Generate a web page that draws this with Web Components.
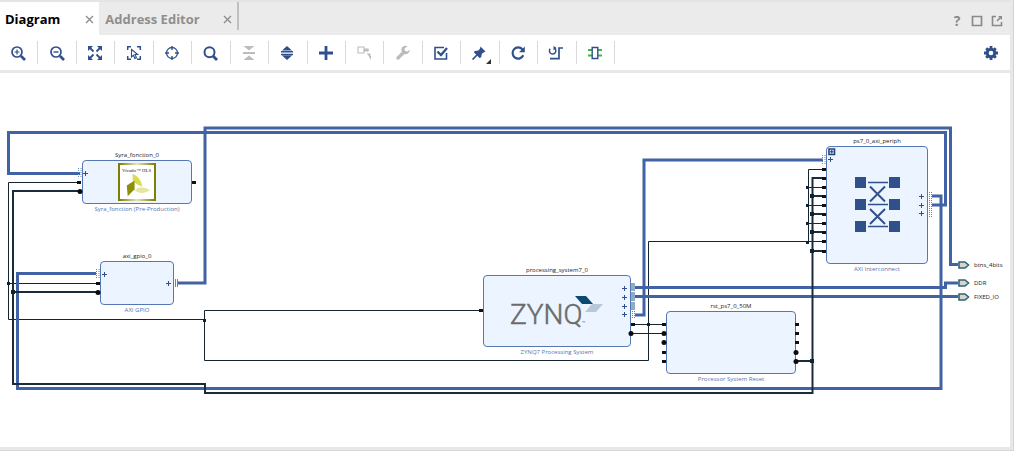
<!DOCTYPE html>
<html lang="en">
<head>
<meta charset="utf-8">
<title>Block Design</title>
<style>
body { margin: 0; background: #fff; font-family: "Open Sans", "Noto Sans", sans-serif; }
</style>
</head>
<body>
<design-panel>
  <panel-tab slot="tabs" label="Diagram" active></panel-tab>
  <panel-tab slot="tabs" label="Address Editor"></panel-tab>
  <tool-bar slot="toolbar"></tool-bar>
  <diagram-canvas>
    <block-node name="Syra_fonction_0" caption="Syra_fonction (Pre-Production)" style="--x:82px;--y:78px;--w:110px;--h:44px"><hls-logo></hls-logo></block-node>
    <block-node name="axi_gpio_0" caption="AXI GPIO" style="--x:100px;--y:179px;--w:74px;--h:44px"></block-node>
    <block-node name="processing_system7_0" caption="ZYNQ7 Processing System" style="--x:483px;--y:193px;--w:148px;--h:72px"><zynq-logo></zynq-logo></block-node>
    <block-node name="rst_ps7_0_50M" caption="Processor System Reset" style="--x:666px;--y:229px;--w:130px;--h:63px"></block-node>
    <block-node name="ps7_0_axi_periph" caption="AXI Interconnect" style="--x:826px;--y:64px;--w:102px;--h:118px"><crossbar-glyph></crossbar-glyph></block-node>
    <wire-layer></wire-layer>
    <external-port style="--x:958px;--y:187px">btns_4bits</external-port>
    <external-port style="--x:958px;--y:205px">DDR</external-port>
    <external-port style="--x:958px;--y:219px">FIXED_IO</external-port>
  </diagram-canvas>
</design-panel>

<script>
const define = (name, render) => customElements.define(name, class extends HTMLElement {
  connectedCallback() {
    if (this.shadowRoot) return;
    this.attachShadow({ mode: 'open' }).innerHTML = render(this);
  }
});

define('design-panel', () => `
<style>
  :host { display: block; margin-right: 10px; border-right: 1px solid #d4d4d4; border-bottom: 1px solid #d8d8d8; background: #e8e8e8; padding: 0 3px 3px 0; }
  header { display: flex; justify-content: space-between; height: 33px; border-top: 2px solid #e4e4e4; background: #ebebeb; }
  nav { display: flex; align-items: stretch; }
  .end { width: 2px; height: 28px; background: #c0c0c0; }
  .actions { display: flex; align-items: center; gap: 6px; padding: 4px 6px 0 0; }
  button { all: unset; display: block; width: 14px; height: 14px; }
  svg { display: block; fill: none; stroke: #8a8a8a; stroke-width: 2; }
  .help { font: bold 14px/14px "Open Sans", sans-serif; color: #8a8a8a; text-align: center; }
</style>
<header>
  <nav role="tablist"><slot name="tabs"></slot><span class="end"></span></nav>
  <div class="actions">
    <button class="help" aria-label="Help">?</button>
    <button aria-label="Maximize"><svg width="14" height="14"><path d="M2.500 2.500h9v9h-9z" stroke-width="1.700"/></svg></button>
    <button aria-label="Float"><svg width="14" height="14"><path d="M6 2.500H2.500v9h9V8M7 7l4-4" stroke-width="1.600"/><path d="M8 2h4v4z" fill="#8a8a8a" stroke="none"/></svg></button>
  </div>
</header>
<slot name="toolbar"></slot>
<slot></slot>`);

define('panel-tab', el => `
<style>
  :host { display: flex; align-items: center; background: #ebebeb; color: #8f8f8f; padding-left: 6px; gap: 23px; }
  :host([active]) { background: #fff; color: #000; padding-left: 5px; gap: 25px; }
  button { all: unset; }
  .name { font-weight: bold; font-size: 13px; line-height: 18px; }
  .close { width: 9px; height: 9px; margin-right: 5px; padding-top: 2px; }
  svg { display: block; stroke: #8c8c8c; stroke-width: 1.3; }
</style>
<button class="name" role="tab" aria-selected="${el.hasAttribute('active')}">${el.getAttribute('label')}</button>
<button class="close" aria-label="Close ${el.getAttribute('label')}"><svg width="9" height="9"><path d="M1 1l7 7M8 1l-7 7"/></svg></button>`);

const B = '#30508c', G = '#bcbcbc';
const tools = [
  ['Zoom In', `<circle cx="7" cy="7" r="5" stroke-width="1.7"/><path d="M11 11l4 4" stroke-width="2.600"/><path d="M4.500 7h5M7 4.500v5" stroke-width="1.2"/>`],
  ['Zoom Out', `<circle cx="7" cy="7" r="5" stroke-width="1.7"/><path d="M11 11l4 4" stroke-width="2.600"/><path d="M4.500 7h5" stroke-width="1.4"/>`],
  ['Zoom Fit', `<path d="M3 3l3.500 3.500M13 3L9.500 6.500M3 13l3.500-3.500M13 13L9.500 9.500" stroke-width="1.8"/><path d="M1 1h5L1 6zM15 1v5l-5-5zM1 15v-5l5 5zM15 15h-5l5-5z" fill="${B}" stroke="none"/>`],
  ['Zoom to Selection', `<path d="M1.700 5V1.700H5M11 1.700h3.300V5M1.700 11v3.300H5M11 14.300h3.300V11" stroke-width="1.5"/><path d="M5.500 4.500v7.500l2-1.800 1.400 3.300 1.600-.7L9 9.500h2.700z" stroke-width="1.1"/>`],
  ['Auto Fit Selection', `<circle cx="8" cy="8" r="5.500" stroke-width="1.3"/><path d="M8 1v4M8 11v4M1 8h4M11 8h4" stroke-width="1.4"/>`],
  ['Search', `<circle cx="7.500" cy="7.300" r="5" stroke-width="2"/><path d="M11 11l4 4" stroke-width="2.800"/>`],
  ['Collapse All', `<path d="M2.500 1h11L8 5.500zM2.500 15h11L8 10.500zM2 7h12v2H2z" fill="${G}" stroke="none"/>`],
  ['Expand All', `<path d="M8 1l5 4.500H3zM8 15l5-4.500H3zM2 6h12v1.500H2zM2 8.700h12v1.500H2z" fill="${B}" stroke="none"/>`],
  ['Add IP', `<path d="M8 1v14M1 8h14" stroke-width="2.800"/>`],
  ['Make Connection', `<path d="M2 2h6v6H2z" stroke="${G}" stroke-width="1.100"/><path d="M8 5h5" stroke="${G}" stroke-width="1.100"/><path d="M8 3l3 2-3 2zM9.500 3.500h3v3h-3zM10.500 8.500h4v4zM12 10l3 1v4z" fill="${G}" stroke="none"/>`],
  ['Customize Block', `<path d="M3 13l6-6" stroke="${G}" stroke-width="3.400" stroke-linecap="round"/><path d="M12.500 1.300A4.200 4.200 0 1 0 14.700 4.600L12.500 6.500l-2.600-.6L9.600 3.500z" fill="${G}" stroke="none"/>`],
  ['Validate Design', `<path d="M11 2.500H2v11.500h11.500V8" stroke-width="1.600"/><path d="M4.500 6.500l3.500 3.500L14 3" stroke-width="2.300"/>`],
  ['Pin', `<path d="M9.500 1.500l5 5-1.500.7-2.200 1.600-.6 3.400L8.500 13 2.800 7.300l1-1.300 3.600-.5L9 3.500z" fill="${B}" stroke="none"/><path d="M6.500 9.500L1.500 14.500" stroke-width="1.700"/><path d="M15 19h5v-5z" fill="#333" stroke="none"/>`],
  ['Regenerate Layout', `<path d="M13.300 10.300A5.600 5.600 0 1 1 12.400 4.300" stroke-width="2.200"/><path d="M14.800 1.500v5.800H9z" fill="${B}" stroke="none"/>`],
  ['Optimize Routing', `<path d="M2.200 3.700A3.200 3.200 0 1 0 6.500 3.200" stroke-width="1.500"/><path d="M5.500 1v4.200l3.200-2.200z" fill="${B}" stroke="none"/><path d="M2 13.700h9V3h4" stroke-width="1.700"/>`],
  ['Interface Ports', `<path d="M1 5h4M1 10.500h4M11 5h4M11 10.500h4" stroke="#43b649" stroke-width="2"/><path d="M5.200 2.500h5.600v11H5.200z" stroke-width="1.400"/>`]
];
define('tool-bar', () => `
<style>
  :host { display: flex; justify-content: space-between; align-items: center; background: #fff; height: 35px; border-bottom: 2px solid #e8e8e8; padding-right: 11px; }
  .group { display: grid; grid-template-columns: repeat(16, 1fr); width: 615px; }
  .cell { display: flex; justify-content: center; align-items: center; height: 23px; padding-right: 1px; border-right: 1px solid #d9d9d9; }
  button { all: unset; display: block; width: 16px; height: 16px; }
  svg { display: block; overflow: visible; fill: none; stroke: ${B}; stroke-width: 2; }
</style>
<div class="group" role="toolbar" aria-label="Diagram tools">${tools.map(([n, p]) => `<div class="cell"><button aria-label="${n}"><svg width="16" height="16" viewBox="0 0 16 16">${p}</svg></button></div>`).join('')}</div>
<button aria-label="Settings"><svg width="16" height="16" viewBox="0 0 16 16"><circle cx="8" cy="8" r="3.800" stroke-width="3"/><path d="M8 1v3M8 12v3M1 8h3M12 8h3M3.200 3.200l2 2M10.800 10.800l2 2M12.800 3.200l-2 2M5.200 10.800l-2 2" stroke-width="2.800"/></svg></button>`);

define('diagram-canvas', () => `
<style>
  :host { display: block; position: relative; min-height: 374px; margin-top: 1px; background: #fff; overflow: hidden; }
</style><slot></slot>`);

define('block-node', el => `
<style>
  :host { position: absolute; left: var(--x); top: var(--y); width: var(--w); display: flex; flex-direction: column; text-align: center; font-size: 6px; white-space: nowrap; }
  .name { line-height: 9px; color: #222; }
  .box { box-sizing: border-box; height: var(--h); border: 1px solid #5578b5; border-radius: 4px; background: #ecf5ff; display: flex; align-items: center; justify-content: center; }
  .caption { line-height: 11px; color: #5673b0; }
</style>
<div class="name">${el.getAttribute('name')}</div>
<div class="box"><slot></slot></div>
<div class="caption">${el.getAttribute('caption')}</div>`);

define('hls-logo', () => `
<style>:host { display: block; } svg { display: block; }</style>
<svg width="38" height="38" viewBox="0 0 39 39">
  <defs><linearGradient id="g"><stop offset="0" stop-color="#7c7c00"/><stop offset=".5" stop-color="#e4e4b8"/><stop offset="1" stop-color="#7c7c00"/></linearGradient></defs>
  <path d="M1 1h37v37H1z" fill="#fff" stroke="url(#g)" stroke-width="2"/>
  <path d="M1 0v39M38 0v39" stroke="#7f7f08" stroke-width="2"/>
  <text x="19" y="9" font-family="Liberation Serif, serif" font-size="5" text-anchor="middle" fill="#222">Vivado™ HLS</text>
  <path d="M15 11q8 3 10 13-8-2-10-7z" fill="#d9dc4e"/>
  <path d="M9 23l8-5v9l-7 7z" fill="#8e8f08"/>
  <path d="M17 28q7-6 16 0-9 6-16 0z" fill="#e5e7a0"/>
</svg>`);

define('zynq-logo', () => `
<style>:host { display: block; padding-bottom: 4px; } svg { display: block; overflow: visible; }</style>
<svg width="92" height="34" viewBox="0 0 92 34">
  <text x="-1" y="32" font-family="Roboto, sans-serif" font-weight="300" font-size="28" fill="#6b6b6b" stroke="#6b6b6b" stroke-width=".5">ZYNQ</text>
  <text x="71" y="33" font-family="Roboto, sans-serif" font-size="6" fill="#6b6b6b">™</text>
  <path d="M64 4h11l7 8H71z" fill="#0b4a70"/>
  <path d="M81 12h11l-7 8H74z" fill="#b7c8d6"/>
</svg>`);

define('crossbar-glyph', () => `
<style>:host { display: block; } svg { display: block; }</style>
<svg width="45" height="56" viewBox="0 0 45 56">
  <g fill="${B}"><path d="M0 0h11v11H0zM34 0h11v11H34zM0 22h11v11H0zM34 22h11v11H34zM0 44h11v11H0zM34 44h11v11H34z"/></g>
  <g stroke="${B}" fill="none"><path stroke-width="1.600" d="M13 5.500h20M13 27.500h20M13 49.500h20"/><path stroke-width="2" d="M15 9.500l15 15M30 9.500l-15 15M15 32l15 15M30 32l-15 15"/></g>
</svg>`);

define('external-port', () => `
<style>
  :host { position: absolute; left: var(--x); top: var(--y); display: flex; align-items: center; gap: 4px; font-size: 6px; line-height: 10px; color: #222; white-space: nowrap; }
  svg { display: block; }
</style>
<svg width="12" height="8"><path d="M1 1h6l3.500 3L7 7H1z" fill="#d8d4cc" stroke="#2c6473" stroke-width="1.600"/></svg><span><slot></slot></span>`);

const plus = [[85, 173], [104, 274], [168, 283], [624, 288], [624, 297], [624, 306], [624, 314], [830, 159], [921, 196], [921, 205], [921, 213]];
const stubs = [[77, 182], [192, 182], [96, 283], [479, 310], [631, 324], [662, 324], [662, 352], [662, 361], [795, 324], [795, 333], [795, 342],
  ...[169, 178, 187, 196, 205, 214, 223, 232, 241, 251].map(y => [822, y])];
const pins = [[80, 191], [98, 292], [631, 333], [664, 333], [664, 342], [796, 352], [796, 361]];
const dots = [[9, 283], [205, 320], [649, 324], [808, 187], [808, 205], [808, 223], [808, 242]];
const bigDots = [[13, 292], [812, 196], [812, 214], [812, 232], [812, 251], [812, 361]];
define('wire-layer', () => `
<style>:host { display: block; position: absolute; left: 0; top: 0; pointer-events: none; } svg { display: block; }</style>
<svg width="1010" height="374" viewBox="0 73 1010 374" fill="none">
  <g stroke="#16242f" stroke-width="1">
    <path d="M81 182.500H8.500V319.500H205M8.500 283.500H100M483 310.500H204.500V360.500H648.500V241.500H826M631 324.500H666M631 333.500H666M826 169.500H808.500V241.500M808 187.500H826M808 205.500H826M808 223.500H826"/>
  </g>
  <g stroke="#4163a5" stroke-width="3">
    <path d="M80 173.500H8.500V132.500H945.500V205H932"/>
    <path d="M178 283H205V128H950.500V264.500H958"/>
    <path d="M96 273.500H17.500V388.500H941V196H932"/>
    <path d="M635 315H644V160H823"/>
    <path d="M635 287.500H945.500V283H958M635 296.500H958"/>
  </g>
  <g stroke="#1a2c3c" stroke-width="2">
    <path d="M81 191H13V384H205V393H812.500V178H826M13 292H100M796 361H812M812 196H826M812 214H826M812 232H826M812 251H826"/>
  </g>
  <g stroke="#5b86bb" stroke-width="1">
    <path d="M175.500 279v8M177.500 279v8"/>
    <path d="M78.500 168v10M81 168v10M96.500 269v10M99 269v10M822.500 155v10M825 155v10" stroke-dasharray="1 1"/>
    <path d="M929.500 192v26M931.500 192v26" stroke-dasharray="1 1"/>
    <path d="M632.500 311v8M634.500 311v8" stroke-dasharray="1 1"/>
  </g>
  <path d="M631 283h4v8h-4zM631 292h4v9h-4zM631 302h4v8h-4z" fill="#8fabca"/>
  <path d="${stubs.map(([x, y]) => `M${x} ${y - 1}h4v3h-4z`).join('')}" fill="#111"/>
  <g fill="#0c0c0c">${pins.map(([x, y]) => `<circle cx="${x}" cy="${y}.500" r="2.500"/>`).join('')}</g>
  <path d="${dots.map(([x, y]) => `M${x - 2} ${y - 1}h3v3h-3z`).join('')}${bigDots.map(([x, y]) => `M${x - 2} ${y - 2}h4v4h-4z`).join('')}" fill="#0f2233"/>
  <path d="${plus.map(([x, y]) => `M${x - 2} ${y}.500h5M${x}.500 ${y - 2}v5`).join('')}" stroke="${B}" stroke-width="1"/>
  <path d="M829 149h5.500v5.500H829z" fill="#ecf5ff" stroke="#24437e" stroke-width="1.600"/>
  <path d="M830 151.750h3.500M831.750 150v3.500" stroke="#24437e" stroke-width="1.200"/>
</svg>`);
</script>
</body>
</html>
